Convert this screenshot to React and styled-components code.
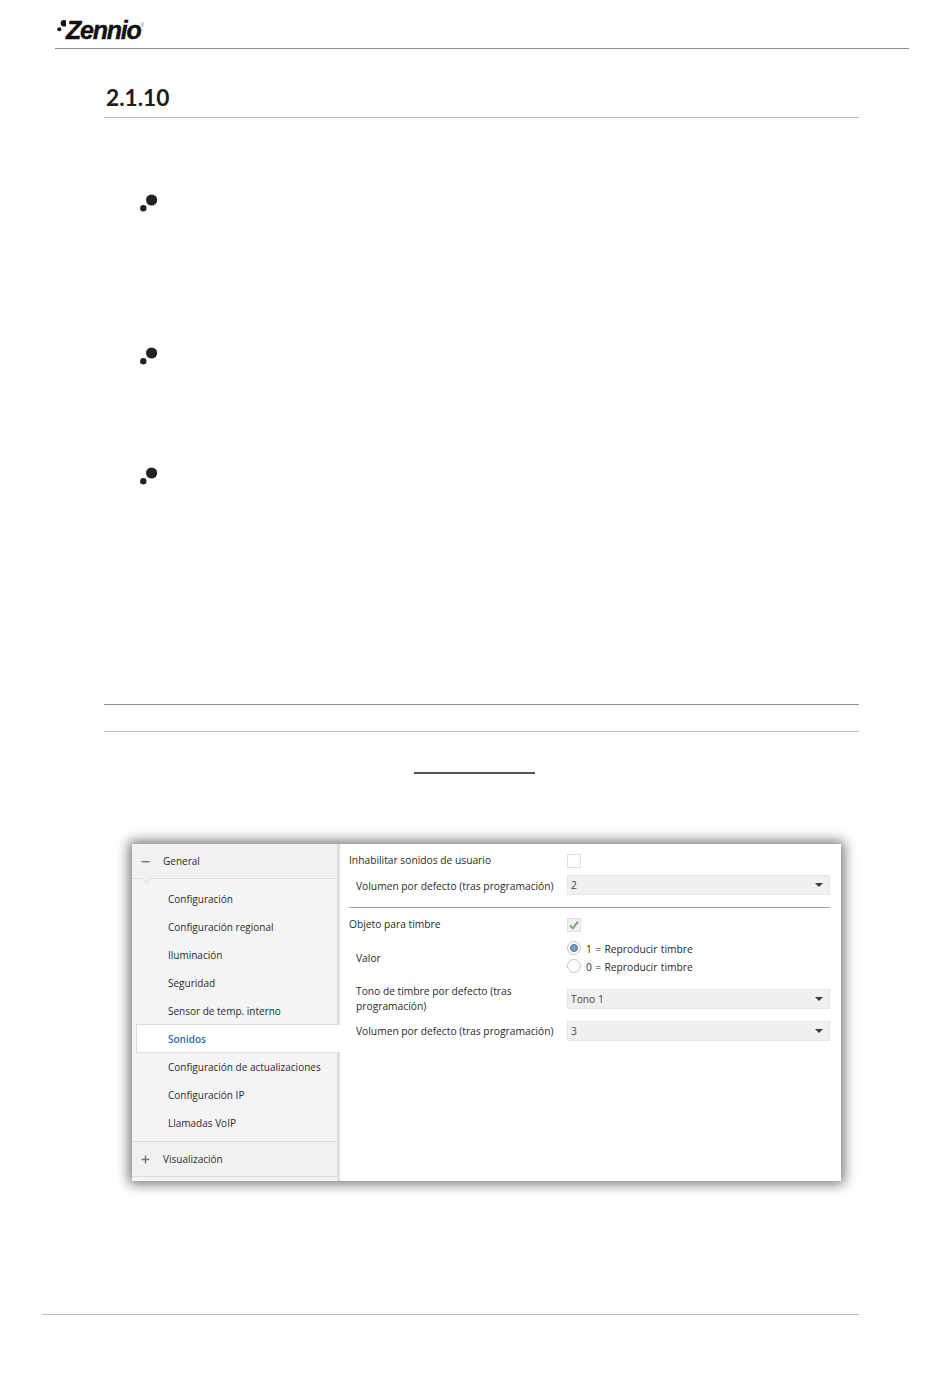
import React from "react";
import styled, { createGlobalStyle } from "styled-components";

const GlobalStyle = createGlobalStyle`
  html, body {
    margin: 0;
    padding: 0;
    background: #fff;
  }
  body {
    font-family: "Open Sans", "Liberation Sans", sans-serif;
    color: #222;
  }
`;

const Page = styled.div`
  width: 950px;
  height: 1379px;
  display: flex;
  flex-direction: column;
  overflow: hidden;
`;

const Header = styled.header`
  width: 854px;
  height: 48px;
  margin-left: 55px;
  border-bottom: 1px solid #8c8c8c;
  display: flex;
  align-items: flex-end;
  flex-shrink: 0;
`;

const Logo = styled.div`
  display: flex;
  align-items: flex-start;
  margin: 0 0 4px 1px;
`;

const LogoWord = styled.span`
  font-family: "Liberation Sans", sans-serif;
  font-weight: 700;
  font-style: italic;
  font-size: 25px;
  line-height: 28px;
  letter-spacing: -1.25px;
  color: #111;
  -webkit-text-stroke: 0.4px #111;
`;

const LogoMark = styled.span`
  font-family: "Liberation Sans", sans-serif;
  font-size: 5px;
  line-height: 5px;
  margin: 7px 0 0 0;
  color: #777;
`;

const Content = styled.main`
  width: 755px;
  margin-left: 104px;
  display: flex;
  flex-direction: column;
  flex-shrink: 0;
`;

const SectionTitle = styled.h2`
  margin: 0;
  height: 69px;
  padding: 0 0 4px 2px;
  box-sizing: border-box;
  border-bottom: 1px solid #bdbdbd;
  display: flex;
  align-items: flex-end;
  font-family: Lato, "Liberation Sans", sans-serif;
  font-weight: 700;
  font-size: 22.7px;
  line-height: 30px;
  color: #1c1c1c;
`;

const BulletList = styled.ul`
  list-style: none;
  margin: 74px 0 0 36px;
  padding: 0;
  height: 512px;
`;

const BulletItem = styled.li`
  height: ${(p) => p.$height}px;
`;

const CaptionRow = styled.div`
  height: 26px;
  border-top: 1px solid #8f8f8f;
  border-bottom: 1px solid #bdbdbd;
`;

const CaptionMark = styled.div`
  width: 121px;
  height: 2px;
  margin: 40px 0 0 310px;
  background: #555;
`;

const Panel = styled.section`
  width: 709px;
  height: 337px;
  margin: 70px 0 0 28px;
  display: flex;
  background: #fff;
  box-shadow: 0 0 12px 3px rgba(0, 0, 0, 0.55);
  font-size: 10.25px;
  color: #2b2b2b;
`;

const Sidebar = styled.nav`
  width: 208px;
  box-sizing: border-box;
  background: #f3f4f6;
  border-right: 3px solid #dfdfdf;
  display: flex;
  flex-direction: column;
  flex-shrink: 0;
  font-size: 10px;
`;

const GroupRow = styled.div`
  position: relative;
  height: 34px;
  display: flex;
  align-items: center;
  background: #f1f1f1;
  border-bottom: 1px solid #dcdcdc;
  flex-shrink: 0;
`;

const GroupIcon = styled.span`
  width: 31px;
  display: flex;
  justify-content: center;
  padding-right: 4px;
  box-sizing: border-box;
  color: #777;
`;

const Notch = styled.span`
  position: absolute;
  left: 10px;
  bottom: -5px;
  width: 8px;
  height: 8px;
  background: #f1f1f1;
  border-right: 1px solid #dcdcdc;
  border-bottom: 1px solid #dcdcdc;
  transform: rotate(45deg) scale(0.8);
`;

const MenuList = styled.div`
  display: flex;
  flex-direction: column;
  padding: 6px 0 4px;
  border-bottom: 1px solid #dcdcdc;
`;

const MenuItem = styled.div`
  height: 28px;
  display: flex;
  align-items: center;
  box-sizing: border-box;
  padding-left: ${(p) => (p.$active ? "31px" : "36px")};
  ${(p) =>
    p.$active &&
    `
    margin: -1px -3px 0 4px;
    background: #fff;
    color: #2f6fae;
    font-weight: 600;
    border: 1px solid #dcdcdc;
    border-right: none;
    height: 29px;
    position: relative;
  `}
`;

const Settings = styled.div`
  flex: 1;
  display: flex;
  flex-direction: column;
  padding: 0 11px 0 9px;
`;

const Row = styled.div`
  display: grid;
  grid-template-columns: 218px 1fr;
  align-items: center;
  height: ${(p) => p.$height}px;
  margin-top: ${(p) => p.$top || 0}px;
`;

const Label = styled.span`
  padding-left: ${(p) => (p.$nested ? "7px" : "0")};
  padding-top: ${(p) => p.$offset || 0}px;
  line-height: 15px;
`;

const Divider = styled.hr`
  width: 100%;
  margin: 12px 0 0;
  border: none;
  border-top: 1px solid #a3a3a3;
`;

const Check = styled.span`
  width: 14px;
  height: 14px;
  box-sizing: border-box;
  border: 1px solid #e0e0e0;
  background: ${(p) => (p.$checked ? "#f0f0f0" : "#fff")};
  display: flex;
  align-items: center;
  justify-content: center;
`;

const Select = styled.div`
  height: 20px;
  box-sizing: border-box;
  border: 1px solid #e6e6e6;
  background: #f0f0f0;
  display: flex;
  align-items: center;
  justify-content: space-between;
  padding: 0 6px 0 3px;
  color: #444;
`;

const Caret = styled.span`
  width: 0;
  height: 0;
  border-left: 4px solid transparent;
  border-right: 4px solid transparent;
  border-top: 4px solid #3a3a3a;
`;

const RadioGroup = styled.div`
  display: flex;
  flex-direction: column;
  gap: 4px;
`;

const RadioRow = styled.div`
  display: flex;
  align-items: center;
  gap: 5px;
  height: 14px;
`;

const RadioText = styled.span`
  padding-top: 2px;
  word-spacing: 0.7px;
`;

const Radio = styled.span`
  width: 14px;
  height: 14px;
  box-sizing: border-box;
  border-radius: 50%;
  border: 1px solid #c4c4c4;
  background: #fff;
  display: flex;
  align-items: center;
  justify-content: center;
  &::after {
    content: "";
    display: ${(p) => (p.$checked ? "block" : "none")};
    width: 8px;
    height: 8px;
    border-radius: 50%;
    background: #7f9fc6;
    border: 1px solid #4f6f96;
    box-sizing: border-box;
  }
`;

const FooterLine = styled.div`
  width: 817px;
  margin: 133px 0 0 42px;
  border-top: 1px solid #bdbdbd;
  flex-shrink: 0;
`;

function BulletMark() {
  return (
    <svg width="20" height="20" viewBox="0 0 20 20">
      <circle cx="11.6" cy="8" r="5.6" fill="#222" />
      <circle cx="3.3" cy="16.3" r="3.2" fill="#222" />
    </svg>
  );
}

function LogoDots() {
  return (
    <svg width="10" height="16" viewBox="0 0 10 16">
      <circle cx="8" cy="7.3" r="3.3" fill="#111" />
      <circle cx="3.3" cy="13.3" r="2" fill="#111" />
    </svg>
  );
}

const menu = [
  "Configuración",
  "Configuración regional",
  "Iluminación",
  "Seguridad",
  "Sensor de temp. interno",
  "Sonidos",
  "Configuración de actualizaciones",
  "Configuración IP",
  "Llamadas VoIP",
];

export default function App() {
  return (
    <Page>
      <GlobalStyle />
      <Header>
        <Logo>
          <LogoDots />
          <LogoWord>Zennio</LogoWord>
          <LogoMark>®</LogoMark>
        </Logo>
      </Header>
      <Content>
        <SectionTitle>2.1.10</SectionTitle>
        <BulletList>
          <BulletItem $height={153}>
            <BulletMark />
          </BulletItem>
          <BulletItem $height={120}>
            <BulletMark />
          </BulletItem>
          <BulletItem $height={239}>
            <BulletMark />
          </BulletItem>
        </BulletList>
        <CaptionRow />
        <CaptionMark />
        <Panel>
          <Sidebar>
            <GroupRow>
              <GroupIcon>
                <svg width="9" height="9" viewBox="0 0 9 9">
                  <rect x="0.5" y="4" width="8" height="1.4" fill="#777" />
                </svg>
              </GroupIcon>
              General
              <Notch />
            </GroupRow>
            <MenuList>
              {menu.map((item) => (
                <MenuItem key={item} $active={item === "Sonidos"}>
                  {item}
                </MenuItem>
              ))}
            </MenuList>
            <GroupRow>
              <GroupIcon>
                <svg width="9" height="9" viewBox="0 0 9 9">
                  <path d="M0.5 4.5H8.5M4.5 0.5V8.5" stroke="#777" strokeWidth="1.5" />
                </svg>
              </GroupIcon>
              Visualización
            </GroupRow>
          </Sidebar>
          <Settings>
            <Row $height={14} $top={9}>
              <Label>Inhabilitar sonidos de usuario</Label>
              <Check />
            </Row>
            <Row $height={20} $top={8}>
              <Label $nested $offset={2}>
                Volumen por defecto (tras programación)
              </Label>
              <Select>
                2
                <Caret />
              </Select>
            </Row>
            <Divider />
            <Row $height={14} $top={9}>
              <Label>Objeto para timbre</Label>
              <Check $checked>
                <svg width="12" height="12" viewBox="0 0 12 12">
                  <path d="M2 6.5L4.8 9.3L10 2.6" fill="none" stroke="#6eaa6e" strokeWidth="1.8" />
                </svg>
              </Check>
            </Row>
            <Row $height={32} $top={10}>
              <Label $nested $offset={2}>
                Valor
              </Label>
              <RadioGroup>
                <RadioRow>
                  <Radio $checked />
                  <RadioText>1 = Reproducir timbre</RadioText>
                </RadioRow>
                <RadioRow>
                  <Radio />
                  <RadioText>0 = Reproducir timbre</RadioText>
                </RadioRow>
              </RadioGroup>
            </Row>
            <Row $height={30} $top={10}>
              <Label $nested $offset={1}>
                Tono de timbre por defecto (tras
                <br />
                programación)
              </Label>
              <Select>
                Tono 1
                <Caret />
              </Select>
            </Row>
            <Row $height={20} $top={8}>
              <Label $nested>Volumen por defecto (tras programación)</Label>
              <Select>
                3
                <Caret />
              </Select>
            </Row>
          </Settings>
        </Panel>
      </Content>
      <FooterLine />
    </Page>
  );
}
